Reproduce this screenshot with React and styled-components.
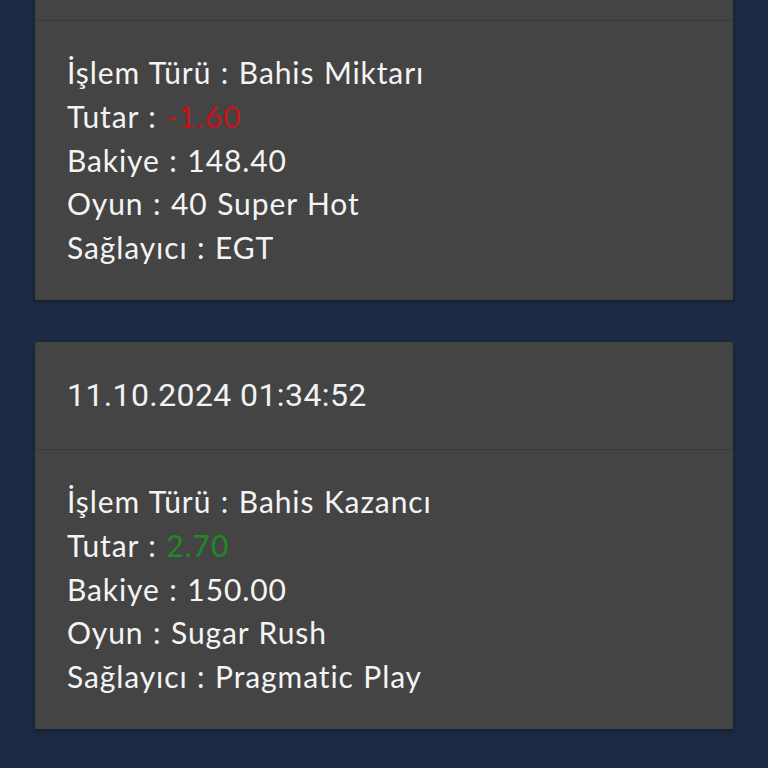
import React from "react";
import styled, { createGlobalStyle } from "styled-components";

const Global = createGlobalStyle`
  html, body { margin: 0; padding: 0; background: #1c2a43; overflow: hidden; }
  body { font-family: Lato, "Noto Sans", sans-serif; }
`;

const Page = styled.div`
  width: 768px;
  height: 768px;
  overflow: hidden;
  background: #1c2a43;
`;

const List = styled.div`
  display: flex;
  flex-direction: column;
  gap: 42px;
  padding: 0 35px;
  margin-top: -87px;
`;

const Card = styled.div`
  background: #444444;
  border-radius: 2px;
  box-shadow: 0 2px 4px rgba(0, 0, 0, 0.35);
`;

const Header = styled.div`
  padding: 31px 32px 32px;
  font-family: Roboto, "Noto Sans", sans-serif;
  font-size: 32px;
  font-weight: 400;
  line-height: 44px;
  letter-spacing: 0.4px;
  color: #f2f2f2;
  border-bottom: 1px solid #3a3a3a;
`;

const Body = styled.div`
  padding: 30px 32px;
  display: flex;
  flex-direction: column;
`;

const Line = styled.div`
  font-family: Lato, "Noto Sans", sans-serif;
  font-size: 30px;
  font-weight: 400;
  line-height: 43.8px;
  letter-spacing: 0.9px;
  word-spacing: 1px;
  color: #f4f4f4;
  white-space: nowrap;
`;

const Amount = styled.span`
  color: ${(p) => (p.$neg ? "#c4141b" : "#1d8a24")};
`;

const data = [
  {
    date: "11.10.2024 01:34:22",
    type: "Bahis Miktarı",
    amount: "-1.60",
    neg: true,
    balance: "148.40",
    game: "40 Super Hot",
    provider: "EGT",
  },
  {
    date: "11.10.2024 01:34:52",
    type: "Bahis Kazancı",
    amount: "2.70",
    neg: false,
    balance: "150.00",
    game: "Sugar Rush",
    provider: "Pragmatic Play",
  },
];

export default function App() {
  return (
    <Page>
      <Global />
      <List>
        {data.map((d, i) => (
          <Card key={i}>
            <Header>{d.date}</Header>
            <Body>
              <Line>İşlem Türü : {d.type}</Line>
              <Line>
                Tutar : <Amount $neg={d.neg}>{d.amount}</Amount>
              </Line>
              <Line>Bakiye : {d.balance}</Line>
              <Line>Oyun : {d.game}</Line>
              <Line>Sağlayıcı : {d.provider}</Line>
            </Body>
          </Card>
        ))}
      </List>
    </Page>
  );
}
